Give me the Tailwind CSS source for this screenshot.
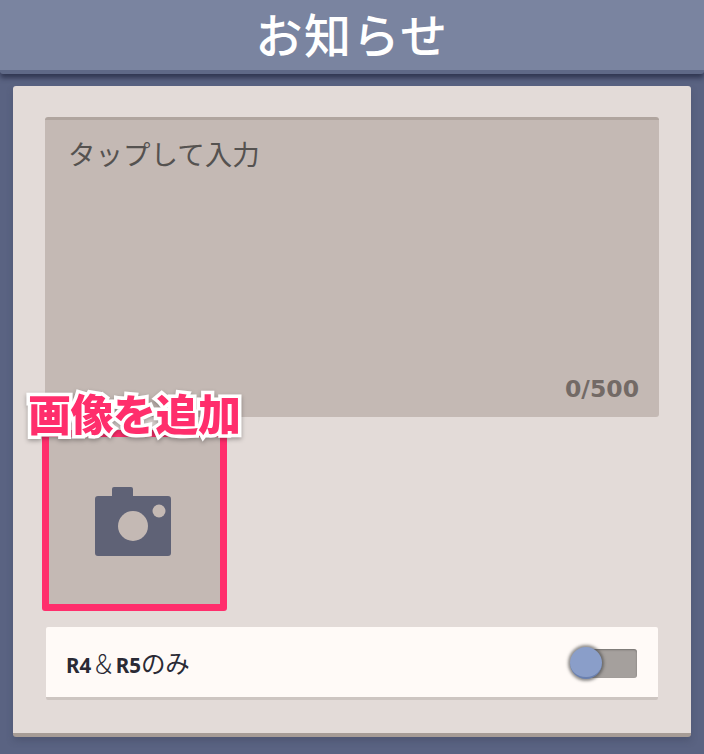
<!DOCTYPE html>
<html lang="ja">
<head>
  <meta charset="UTF-8" />
  <title>お知らせ</title>
  <script src="https://cdn.jsdelivr.net/npm/@tailwindcss/browser@4"></script>
</head>
<body class="w-[704px] h-[754px] overflow-hidden bg-[#5a6382] font-['Noto_Sans_CJK_JP',sans-serif]">
  <!-- Header -->
  <header class="h-[74px] bg-[#7a84a0] border-b-[4px] border-[#5f6987] rounded-b-[3px] shadow-[0_4px_5px_rgba(35,40,65,0.75)] flex items-center justify-center">
    <h1 class="text-[47px] leading-[60px] text-white font-medium tracking-[1.5px] -mt-[5px]">お知らせ</h1>
  </header>

  <!-- Card -->
  <main class="relative mt-[12px] mx-[13px] h-[651px] bg-[#e3dbd8] rounded-[3px] border-b-[4px] border-[#a69c96] shadow-[0_4px_6px_rgba(60,66,90,0.35)] pt-[31px] px-[32px]">
    <div class="relative h-[300px] w-[614px] bg-[#c4b9b4] rounded-[3px] border-t-[3px] border-[#b0a59f] pl-[23px] pt-[16px]">
      <p class="text-[27.5px] leading-[34px] text-[#555250]">タップして入力</p>
      <span class="absolute right-[20px] bottom-[16px] text-[23.5px] leading-none font-bold text-[#736a66] font-['DejaVu_Sans',sans-serif]">0/500</span>
    </div>

    <div class="relative mt-[13px] -ml-[3px] w-[185px] h-[181px] bg-[#c4b9b4] border-[7px] border-[#ff2e6c] rounded-[3px] flex items-center justify-center">
      <svg class="mt-[1px] mr-[3px]" width="76" height="69" viewBox="0 0 76 69" fill="#5f6276">
        <path d="M17 2a2 2 0 0 1 2-2h17a2 2 0 0 1 2 2v7h35a3 3 0 0 1 3 3v54a3 3 0 0 1-3 3H3a3 3 0 0 1-3-3V12a3 3 0 0 1 3-3h14z"/>
        <circle cx="38" cy="39" r="15" fill="#c4b9b4"/>
        <circle cx="64" cy="24" r="6.5" fill="#c4b9b4"/>
      </svg>
    </div>

    <!-- Annotation -->
    <span class="absolute left-[15px] top-[301px] text-[43px] leading-[50px] font-black text-[#ff2e6c] tracking-[-0.5px] [-webkit-text-stroke:7px_white] [paint-order:stroke_fill] drop-shadow-[0_2px_2px_rgba(0,0,0,0.3)]">画像を追加</span>

    <!-- Toggle row -->
    <div class="mt-[16px] ml-[1px] w-[612px] h-[73px] bg-[#fffaf7] rounded-[2px] border-b-[3px] border-[#cdc5c1] flex items-center justify-between pl-[20px] pr-[21px]">
      <span class="text-[24.5px] leading-none text-[#2a2a35] flex items-baseline mt-[2px]">
        <b class="font-['Noto_Sans',sans-serif] text-[20.5px] font-bold">R4</b>
        <span class="font-light">＆</span>
        <b class="font-['Noto_Sans',sans-serif] text-[20.5px] font-bold">R5</b>のみ
      </span>
      <div class="relative w-[68px] h-[29px] mt-[3px] flex justify-end">
        <div class="w-[56px] h-[29px] bg-[#a5a09d] rounded-[3px] shadow-[inset_0_1px_2px_rgba(0,0,0,0.3)]"></div>
        <div class="absolute left-[1px] -top-[2px] w-[32px] h-[32px] rounded-full bg-[#8a9ec9] border-b-[2px] border-[#6a80b0] shadow-[0_0_3px_2px_rgba(70,70,70,0.6)]"></div>
      </div>
    </div>
  </main>
</body>
</html>
